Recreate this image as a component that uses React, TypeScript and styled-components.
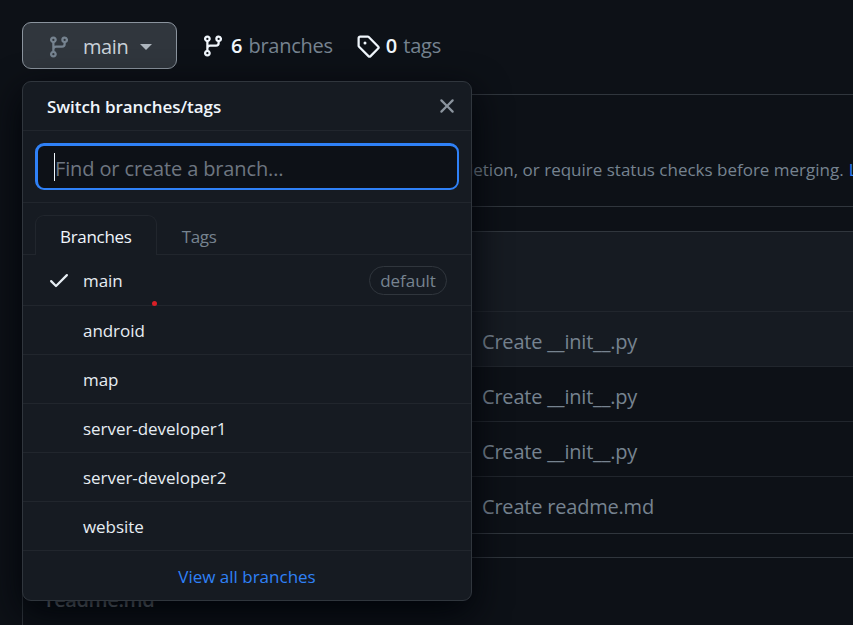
import React from "react";
import styled, { createGlobalStyle } from "styled-components";

const GlobalStyle = createGlobalStyle`
  *, *::before, *::after { box-sizing: border-box; }
  html, body { margin: 0; height: 100%; overflow: hidden; background: #0d1117; }
  body { font-family: "Open Sans", "Noto Sans", sans-serif; color: #e6edf3; }
`;

const paths = {
  branch:
    "M11.75 2.5a.75.75 0 100 1.5.75.75 0 000-1.5zm-2.25.75a2.25 2.25 0 113 2.122V6A2.5 2.5 0 0110 8.5H6a1 1 0 00-1 1v1.128a2.251 2.251 0 11-1.5 0V5.372a2.25 2.25 0 111.5 0v1.836A2.492 2.492 0 016 7h4a1 1 0 001-1v-.628A2.25 2.25 0 019.5 3.25zM4.25 12a.75.75 0 100 1.5.75.75 0 000-1.5zM3.5 3.25a.75.75 0 111.5 0 .75.75 0 01-1.5 0z",
  tag: "M2.5 7.775V2.75a.25.25 0 01.25-.25h5.025a.25.25 0 01.177.073l6.25 6.25a.25.25 0 010 .354l-5.025 5.025a.25.25 0 01-.354 0l-6.25-6.25a.25.25 0 01-.073-.177zm-1.5 0V2.75C1 1.784 1.784 1 2.75 1h5.025c.464 0 .91.184 1.238.513l6.25 6.25a1.75 1.75 0 010 2.474l-5.026 5.026a1.75 1.75 0 01-2.474 0l-6.25-6.25A1.75 1.75 0 011 7.775zM6 5a1 1 0 100 2 1 1 0 000-2z",
  x: "M3.72 3.72a.75.75 0 011.06 0L8 6.94l3.22-3.22a.75.75 0 111.06 1.06L9.06 8l3.22 3.22a.75.75 0 11-1.06 1.06L8 9.06l-3.22 3.22a.75.75 0 01-1.06-1.06L6.94 8 3.72 4.78a.75.75 0 010-1.06z",
  check:
    "M13.78 4.22a.75.75 0 010 1.06l-7.25 7.25a.75.75 0 01-1.06 0L2.22 9.28a.75.75 0 011.06-1.06L6 10.94l6.72-6.72a.75.75 0 011.06 0z",
};

const Svg = styled.svg`
  display: block;
  width: 24px;
  height: 24px;
  flex: none;
  fill: currentColor;
`;

const Icon = ({ name }: { name: keyof typeof paths }) => (
  <Svg viewBox="0 0 16 16" aria-hidden="true">
    <path fillRule="evenodd" d={paths[name]} />
  </Svg>
);

const Page = styled.div`
  height: 625px;
  padding: 22px 0 0 22px;
  overflow: hidden;
`;

const Toolbar = styled.div`
  display: flex;
  align-items: center;
  height: 47px;
`;

const BranchPicker = styled.div`
  position: relative;
  margin-right: 24px;
`;

const BranchButton = styled.button`
  display: flex;
  align-items: center;
  width: 155px;
  height: 47px;
  padding: 3px 0 0 24px;
  border: 1px solid #8b949e;
  border-radius: 9px;
  background: #30363d;
  color: #768390;
  font-family: inherit;
`;

const ButtonLabel = styled.span`
  margin: 0 12px 0 12px;
  font-size: 20px;
  line-height: 30px;
  letter-spacing: -0.4px;
  color: #c9d1d9;
`;

const Caret = styled.span`
  border: 6px solid transparent;
  border-top-color: #adb5bd;
  border-bottom: 0;
`;

const Stat = styled.a<{ $gap: number }>`
  display: flex;
  align-items: center;
  margin-right: ${(p) => p.$gap}px;
  font-size: 20px;
  line-height: 30px;
  letter-spacing: -0.25px;
  color: #f0f6fc;
`;

const Count = styled.strong`
  margin: 0 6px;
  font-weight: 600;
  letter-spacing: 0;
`;

const StatLabel = styled.span`
  color: #768390;
`;

const Menu = styled.div`
  position: absolute;
  z-index: 2;
  top: 59px;
  left: 0;
  width: 450px;
  height: 520px;
  overflow: hidden;
  border: 1px solid #30363d;
  border-radius: 9px;
  background: #161b22;
  box-shadow: 0 12px 36px #010409;
`;

const MenuHeader = styled.div`
  display: flex;
  align-items: center;
  justify-content: space-between;
  height: 49px;
  padding: 0 12px 0 24px;
  border-bottom: 1px solid #21262d;
  color: #8b949e;
`;

const MenuTitle = styled.span`
  font-size: 17px;
  font-weight: 600;
  letter-spacing: -0.05px;
  color: #f0f6fc;
`;

const SearchArea = styled.div`
  height: 72px;
  padding: 12px;
  border-bottom: 1px solid #21262d;
`;

const SearchField = styled.div`
  display: flex;
  align-items: center;
  height: 47px;
  padding: 3px 0 0 16px;
  border: 3px solid #2f81f7;
  border-width: 3px 2px 2px 3px;
  border-radius: 9px;
  background: #0d1117;
  font-size: 20px;
  letter-spacing: -0.13px;
  color: #6e7681;
`;

const TextCursor = styled.span`
  width: 1px;
  height: 28px;
  margin-top: -4px;
  background: #f0f6fc;
`;

const Tabs = styled.div`
  display: flex;
  align-items: flex-end;
  height: 52px;
  padding-left: 12px;
  box-shadow: inset 0 -1px #21262d;
`;

const Tab = styled.button<{ $active?: boolean }>`
  height: 40px;
  padding: 1px 24px 0;
  border: 1px solid ${(p) => (p.$active ? "#21262d" : "transparent")};
  border-bottom: 0;
  border-radius: 9px 9px 0 0;
  background: ${(p) => (p.$active ? "#161b22" : "transparent")};
  font-family: inherit;
  font-size: 17px;
  letter-spacing: -0.3px;
  color: ${(p) => (p.$active ? "#f0f6fc" : "#768390")};
`;

const BranchRow = styled.div<{ $tall?: boolean }>`
  display: flex;
  align-items: center;
  height: ${(p) => (p.$tall ? 51 : 49)}px;
  padding: 0 24px;
  border-bottom: 1px solid #21262d;
  font-size: 17px;
  letter-spacing: -0.05px;
  color: #e6edf3;
`;

const CheckSlot = styled.span`
  width: 24px;
  margin-right: 12px;
`;

const DefaultBadge = styled.span`
  margin-left: auto;
  width: 78px;
  height: 29px;
  border: 1px solid #30363d;
  border-radius: 15px;
  line-height: 28px;
  text-align: center;
  color: #768390;
`;

const MenuFooter = styled.a`
  display: block;
  line-height: 51px;
  text-align: center;
  font-size: 17px;
  color: #2f81f7;
`;

const Marker = styled.span`
  position: absolute;
  top: 219px;
  left: 129px;
  width: 5px;
  height: 5px;
  border-radius: 50%;
  background: #da1f26;
`;

const Notice = styled.section`
  display: flex;
  align-items: flex-start;
  gap: 5px;
  height: 113px;
  margin-top: 25px;
  padding: 62px 0 0 426px;
  border: 1px solid #30363d;
  border-right: 0;
  border-radius: 9px 0 0 9px;
  overflow: hidden;
  white-space: nowrap;
  font-size: 17px;
  line-height: 26px;
  color: #768390;
`;

const LearnLink = styled.a`
  color: #2f81f7;
`;

const Files = styled.section`
  height: 303px;
  margin-top: 24px;
  border: 1px solid #30363d;
  border-right: 0;
  border-radius: 9px 0 0 9px;
  overflow: hidden;
`;

const FilesHeader = styled.div`
  height: 79px;
  background: #161b22;
`;

const FileRow = styled.div<{ $hover?: boolean }>`
  height: 55px;
  padding-left: 459px;
  border-top: 1px solid #21262d;
  background: ${(p) => (p.$hover ? "#161b22" : "transparent")};
  font-size: 20px;
  line-height: 60px;
  letter-spacing: -0.2px;
  color: #768390;
`;

const Readme = styled.section`
  height: 100px;
  margin-top: 23px;
  padding: 29px 23px;
  border: 1px solid #30363d;
  border-right: 0;
  border-radius: 9px 0 0 9px;
  font-size: 20px;
  line-height: 26px;
  font-weight: 600;
  letter-spacing: -0.4px;
  color: #8b949e;
`;

const branches = ["main", "android", "map", "server-developer1", "server-developer2", "website"];
const commits = ["Create __init__.py", "Create __init__.py", "Create __init__.py", "Create readme.md"];

export default function App() {
  return (
    <Page>
      <GlobalStyle />
      <Toolbar>
        <BranchPicker>
          <BranchButton>
            <Icon name="branch" />
            <ButtonLabel>main</ButtonLabel>
            <Caret />
          </BranchButton>
          <Menu>
            <MenuHeader>
              <MenuTitle>Switch branches/tags</MenuTitle>
              <Icon name="x" />
            </MenuHeader>
            <SearchArea>
              <SearchField>
                <TextCursor />
                Find or create a branch…
              </SearchField>
            </SearchArea>
            <Tabs>
              <Tab $active>Branches</Tab>
              <Tab>Tags</Tab>
            </Tabs>
            {branches.map((branch, i) => (
              <BranchRow key={branch} $tall={i === 0}>
                <CheckSlot>{i === 0 && <Icon name="check" />}</CheckSlot>
                {branch}
                {i === 0 && <DefaultBadge>default</DefaultBadge>}
              </BranchRow>
            ))}
            <MenuFooter>View all branches</MenuFooter>
            <Marker />
          </Menu>
        </BranchPicker>
        <Stat $gap={23}>
          <Icon name="branch" />
          <Count>6</Count>
          <StatLabel>branches</StatLabel>
        </Stat>
        <Stat $gap={0}>
          <Icon name="tag" />
          <Count>0</Count>
          <StatLabel>tags</StatLabel>
        </Stat>
      </Toolbar>
      <Notice>
        <span>deletion, or require status checks before merging.</span>
        <LearnLink>Learn more</LearnLink>
      </Notice>
      <Files>
        <FilesHeader />
        {commits.map((message, i) => (
          <FileRow key={i} $hover={i === 0}>
            {message}
          </FileRow>
        ))}
      </Files>
      <Readme>readme.md</Readme>
    </Page>
  );
}
